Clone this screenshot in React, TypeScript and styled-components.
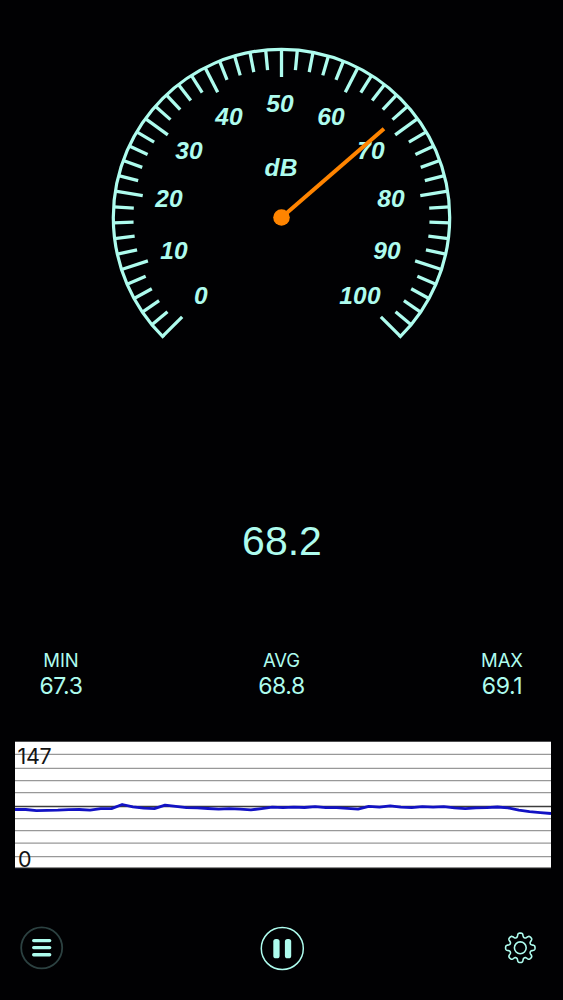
import * as React from 'react';
import styled, { createGlobalStyle } from 'styled-components';

const MINT = '#aefcee';
const ORANGE = '#ff8400';

const GlobalStyle = createGlobalStyle`
    body {
        margin: 0;
        background-color: #010103;
    }
`;
const Screen = styled.main`
    display: flex;
    flex-direction: column;
    width: 563px;
    height: 1000px;
    overflow: hidden;
    color: ${MINT};
    background-color: #010103;
    font-family: Inter, "Liberation Sans", sans-serif;
`;
const GaugeArea = styled.section`
    display: flex;
    justify-content: center;
    padding-top: 40px;
    height: 310px;
`;
const GaugeLabel = styled.text`
    font: italic bold 24.5px "Liberation Sans", sans-serif;
    letter-spacing: 0.2px;
    fill: ${MINT};
    text-anchor: middle;
`;
const Current = styled.div`
    display: flex;
    align-items: center;
    justify-content: center;
    height: 60px;
    margin-top: 161px;
    padding-left: 1px;
    font: 41px "Liberation Sans", sans-serif;
`;
const Stats = styled.section`
    display: flex;
    justify-content: space-between;
    padding: 0 10px;
    margin-top: 78px;
    height: 92px;
`;
const Stat = styled.div`
    display: flex;
    flex-direction: column;
    align-items: center;
    width: 102px;
`;
const StatName = styled.span`
    font-size: 18.5px;
    line-height: 22px;
    letter-spacing: -0.1px;
`;
const StatValue = styled.span`
    font-size: 23px;
    line-height: 31px;
    letter-spacing: -0.4px;
`;
const ChartArea = styled.section`
    height: 127px;
    padding: 0 12px 0 15px;
`;
const ChartSvg = styled.svg`
    display: block;
    overflow: visible;
`;
const ChartLabel = styled.text`
    font: 21.5px Inter, sans-serif;
    letter-spacing: -0.3px;
    fill: #141414;
`;
const Toolbar = styled.nav`
    display: flex;
    align-items: center;
    justify-content: space-between;
    height: 60px;
    margin-top: 50px;
    padding: 0 18px;
`;
const IconButton = styled.button`
    display: flex;
    width: 48px;
    height: 48px;
    padding: 0;
    border: none;
    background: none;
    color: ${MINT};
    cursor: pointer;
`;

const CX = 181.5;
const CY = 177.5;
const RADIUS = 168.2;

const LABELS: [string, number, number][] = [
    ['0', 101, 264],
    ['10', 74, 219],
    ['20', 69, 167],
    ['30', 89, 119],
    ['40', 129, 85],
    ['50', 180, 72],
    ['60', 231, 85],
    ['70', 271, 119],
    ['80', 291, 167],
    ['90', 287, 219],
    ['100', 260, 264],
    ['dB', 181, 135.5],
];

// -135deg at 0 dB, +135deg at 100 dB, 0deg points up
const polar = (db: number, r: number) => {
    const a = ((db * 2.7 - 135) * Math.PI) / 180;
    return { x: CX + r * Math.sin(a), y: CY - r * Math.cos(a) };
};

const Gauge = ({ value }: { value: number }) => {
    const start = polar(0, RADIUS);
    const end = polar(100, RADIUS);
    const tip = polar(value, 135.5);
    return (
        <svg width="363" height="310" viewBox="0 0 363 310">
            <path
                d={`M${start.x} ${start.y}A${RADIUS} ${RADIUS} 0 1 1 ${end.x} ${end.y}`}
                fill="none"
                stroke={MINT}
                strokeWidth="3.2"
                strokeLinecap="square"
            />
            {Array.from({ length: 51 }, (_, i) => {
                const inner = polar(i * 2, i % 5 === 0 ? 140.5 : 148);
                const outer = polar(i * 2, RADIUS);
                return (
                    <line key={i} x1={inner.x} y1={inner.y} x2={outer.x} y2={outer.y} stroke={MINT} strokeWidth="3.3" />
                );
            })}
            {LABELS.map(([text, x, y]) => (
                <GaugeLabel key={text} x={x} y={y}>{text}</GaugeLabel>
            ))}
            <line x1={CX} y1={CY} x2={tip.x} y2={tip.y} stroke={ORANGE} strokeWidth="4" />
            <circle cx={CX} cy={CY} r="8.3" fill={ORANGE} />
        </svg>
    );
};

const GRID = [13.4, 27.4, 39.6, 51.6, 77.6, 89.6, 102.1, 115.6];
const LEVELS = [
    67.9, 67.9, 69.1, 68.7, 68.5, 68, 67.9, 68.5, 67, 67, 62.9, 65.2, 66.5, 67, 63.5, 64.7, 66.1, 66.2,
    66.9, 67.6, 67, 67.5, 68.3, 67, 65.5, 66, 65.5, 65.9, 65, 66, 66, 66.8, 67.5, 64.8, 65.5, 64.2,
    65.6, 66, 65, 65.5, 65, 66.2, 67, 66.2, 66.1, 65.4, 66.2, 68.5, 70, 71, 71.9,
];

const Chart = () => (
    <ChartSvg width="536" height="127" viewBox="0 0 536 127">
        <rect y="0.7" width="536" height="126" fill="#fff" />
        {GRID.map((y) => (
            <line key={y} x2="536" y1={y} y2={y} stroke="#989898" strokeWidth="1.4" />
        ))}
        <line x2="536" y1="65.5" y2="65.5" stroke="#3c3c3c" strokeWidth="1.3" />
        <line x2="536" y1="126.7" y2="126.7" stroke="#888" />
        <polyline
            points={LEVELS.map((y, i) => `${(i * 536) / (LEVELS.length - 1)},${y + 0.6}`).join(' ')}
            fill="none"
            stroke="#1212c4"
            strokeWidth="2.8"
            strokeLinejoin="round"
        />
        <ChartLabel x="2.5" y="23.3">147</ChartLabel>
        <ChartLabel x="3" y="125.5">0</ChartLabel>
    </ChartSvg>
);

const MenuIcon = () => (
    <svg width="48" height="48" viewBox="0 0 48 48">
        <circle cx="23.7" cy="23.8" r="20.5" fill="none" stroke="#2c4141" strokeWidth="1.8" />
        <path d="M15.7 16.6h16M15.7 23.6h16M15.7 30.8h16" stroke="currentColor" strokeWidth="3.4" strokeLinecap="round" />
    </svg>
);

const PauseIcon = () => (
    <svg width="48" height="48" viewBox="0 0 48 48">
        <circle cx="24.3" cy="24.5" r="21" fill="none" stroke="currentColor" strokeWidth="1.5" />
        <rect x="15.3" y="15" width="6.3" height="19.3" rx="2.6" fill="currentColor" />
        <rect x="26.9" y="15" width="6.3" height="19.3" rx="2.6" fill="currentColor" />
    </svg>
);

// eight rounded teeth, traced around the hub
const gearPoints = Array.from({ length: 240 }, (_, i) => {
    const a = (i / 240) * Math.PI * 2;
    const r = 12.7 + 2.1 * Math.tanh(1.7 * (Math.cos(8 * a) + 0.15));
    return `${(23.3 + r * Math.sin(a)).toFixed(2)},${(23.8 - r * Math.cos(a)).toFixed(2)}`;
}).join(' ');

const GearIcon = () => (
    <svg width="48" height="48" viewBox="0 0 48 48" fill="none" stroke="currentColor" strokeWidth="1.6" strokeLinejoin="round">
        <polygon points={gearPoints} />
        <circle cx="23.3" cy="23.8" r="5.9" />
    </svg>
);

const STATS = [
    { name: 'MIN', value: '67.3' },
    { name: 'AVG', value: '68.8' },
    { name: 'MAX', value: '69.1' },
];

const App = () => (
    <>
        <GlobalStyle />
        <Screen>
            <GaugeArea>
                <Gauge value={68.2} />
            </GaugeArea>
            <Current>68.2</Current>
            <Stats>
                {STATS.map(({ name, value }) => (
                    <Stat key={name}>
                        <StatName>{name}</StatName>
                        <StatValue>{value}</StatValue>
                    </Stat>
                ))}
            </Stats>
            <ChartArea>
                <Chart />
            </ChartArea>
            <Toolbar>
                <IconButton aria-label="Menu"><MenuIcon /></IconButton>
                <IconButton aria-label="Pause"><PauseIcon /></IconButton>
                <IconButton aria-label="Settings"><GearIcon /></IconButton>
            </Toolbar>
        </Screen>
    </>
);

export default App;
